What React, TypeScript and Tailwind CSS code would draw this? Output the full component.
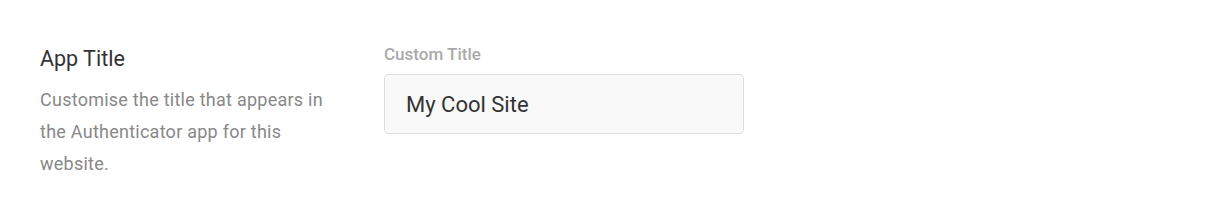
export default function App() {
  return (
    <div
      className="w-[1220px] h-[222px] bg-white"
      style={{ fontFamily: 'Roboto, "Liberation Sans", sans-serif' }}
    >
      <div className="flex gap-[44px] pl-10 pt-[45px]">
        {/* Left: setting description */}
        <div className="w-[300px]">
          <h3 className="text-[21.5px] leading-7 text-[#333333] mb-[11px]">App Title</h3>
          <p className="text-[18px] leading-8 tracking-[0.25px] text-[#888888]">
            Customise the title that appears in the Authenticator app for this website.
          </p>
        </div>

        {/* Right: input */}
        <div className="flex flex-col">
          <label className="text-[17px] leading-5 font-medium text-[#aaaaaa] -mt-px mb-[10px]">
            Custom Title
          </label>
          <input
            type="text"
            defaultValue="My Cool Site"
            className="w-[360px] h-[60px] px-[21px] rounded bg-[#f9f9f9] border border-[#dddddd] text-[22px] text-[#333333] outline-none"
          />
        </div>
      </div>
    </div>
  );
}
